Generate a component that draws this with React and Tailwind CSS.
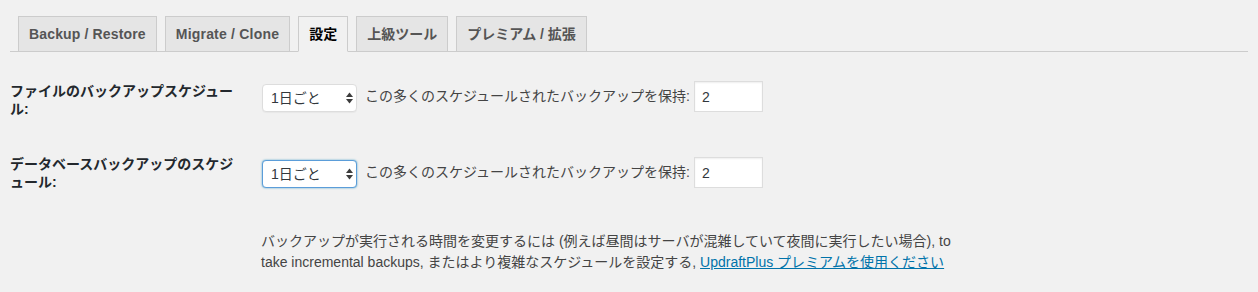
import React from "react";

const tabs = [
  { label: "Backup / Restore", active: false, tr: "tracking-[0.15px]" },
  { label: "Migrate / Clone", active: false, tr: "tracking-[0.2px]" },
  { label: "設定", active: true, tr: "tracking-normal" },
  { label: "上級ツール", active: false, tr: "tracking-normal" },
  { label: "プレミアム / 拡張", active: false, tr: "tracking-normal" },
];

function SelectBox({ focused }) {
  return (
    <div className="relative self-end w-[95px] h-[28px] shrink-0">
      <select
        defaultValue="daily"
        className={
          focused
            ? "appearance-none w-full h-full rounded-[4px] bg-white border border-[#5b9dd9] shadow-[0_0_2px_rgba(30,140,190,0.8)] pl-[8px] text-[14px] leading-[26px] text-[#32373c] font-['Liberation_Sans','Noto_Sans_CJK_JP',sans-serif] outline-none"
            : "appearance-none w-full h-full rounded-[4px] bg-white border border-[#ddd] shadow-[0_1px_1px_rgba(0,0,0,0.04)] pl-[8px] text-[14px] leading-[26px] text-[#32373c] font-['Liberation_Sans','Noto_Sans_CJK_JP',sans-serif] outline-none"
        }
      >
        <option value="daily">1日ごと</option>
      </select>
      <svg
        className="absolute right-[4px] top-[8px] pointer-events-none"
        width="7"
        height="12"
        viewBox="0 0 7 12"
      >
        <path d="M0 5 L3.5 0.5 L7 5 Z" fill="#3c3c3c" />
        <path d="M0 7 L7 7 L3.5 11.5 Z" fill="#3c3c3c" />
      </svg>
    </div>
  );
}

function Controls({ focused }) {
  return (
    <div className="flex items-center h-[31px]">
      <SelectBox focused={focused} />
      <span className="ml-[8px] text-[14px] text-[#444] whitespace-nowrap">
        この多くのスケジュールされたバックアップを保持:
      </span>
      <input
        type="text"
        defaultValue="2"
        className="ml-[4px] w-[69px] h-[31px] bg-white border border-[#ddd] shadow-[inset_0_1px_2px_rgba(0,0,0,0.07)] px-[7px] text-[14px] text-[#32373c] outline-none font-['Liberation_Sans','Noto_Sans_CJK_JP',sans-serif]"
      />
    </div>
  );
}

export default function App() {
  return (
    <div
      lang="ja"
      className="w-full h-[292px] bg-[#f1f1f1] font-['Liberation_Sans','Noto_Sans_CJK_JP',sans-serif] text-[#444] overflow-hidden"
    >
      <div className="mx-[10px] pt-[16px] pl-[8px] border-b border-[#ccc] flex gap-[8px]">
        {tabs.map((t) => (
          <div
            key={t.label}
            className={
              (t.active
                ? "-mb-px px-[10px] py-[5px] leading-[24px] text-[14px] font-bold border border-[#ccc] border-b-[#f1f1f1] bg-[#f1f1f1] text-black whitespace-nowrap "
                : "-mb-px px-[10px] py-[5px] leading-[24px] text-[14px] font-bold border border-[#ccc] bg-[#e5e5e5] text-[#555] whitespace-nowrap ") + t.tr
            }
          >
            {t.label}
          </div>
        ))}
      </div>

      <div className="pl-[10px] pt-[29px]">
        <div className="flex items-start">
          <div className="w-[252px] shrink-0 pr-[22px] mt-[1px] text-[14px] leading-[18px] font-bold text-[#23282d]">
            ファイルのバックアップスケジュール:
          </div>
          <Controls focused={false} />
        </div>

        <div className="flex items-start mt-[39px]">
          <div className="w-[252px] shrink-0 pr-[22px] -mt-[2px] text-[14px] leading-[18px] font-bold text-[#23282d]">
            データベースバックアップのスケジュール:
          </div>
          <Controls focused={true} />
        </div>

        <div className="flex mt-[40px]">
          <div className="w-[251px] shrink-0" />
          <p className="w-[705px] text-[14px] leading-[21px] text-[#444]">
            バックアップが実行される時間を変更するには (例えば昼間はサーバが混雑していて夜間に実行したい場合), to take incremental backups, またはより複雑なスケジュールを設定する,{" "}
            <a href="#" className="text-[#0073aa] underline">
              UpdraftPlus プレミアムを使用ください
            </a>
          </p>
        </div>
      </div>
    </div>
  );
}
